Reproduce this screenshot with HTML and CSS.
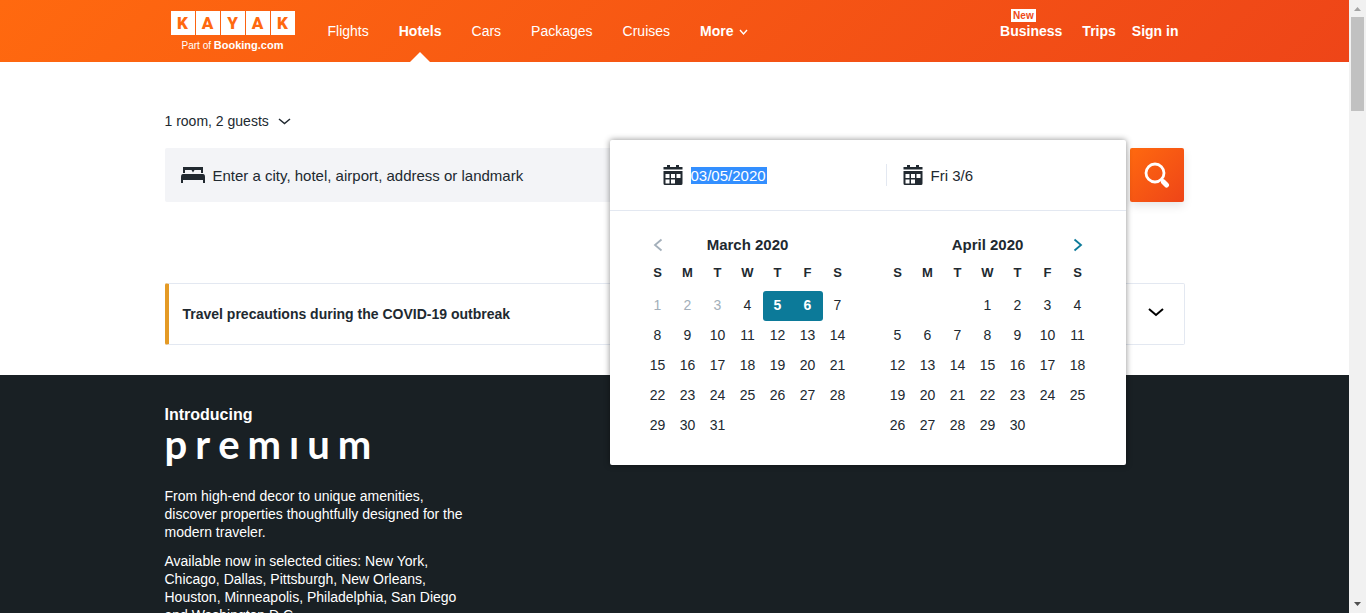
FILE: index.html
```html
<!DOCTYPE html>
<html lang="en">
<head>
<meta charset="utf-8">
<title>Hotels</title>
<link rel="stylesheet" href="styles.css">
</head>
<body>
<div class="page">
  <header class="header">
    <div class="container header-inner">
      <a class="logo" href="#">
        <span class="logo-tiles"><span>K</span><span>A</span><span>Y</span><span>A</span><span>K</span></span>
        <span class="logo-sub">Part of <b>Booking.com</b></span>
      </a>
      <nav class="nav">
        <a href="#">Flights</a>
        <a class="active" href="#">Hotels</a>
        <a href="#">Cars</a>
        <a href="#">Packages</a>
        <a href="#">Cruises</a>
        <button class="more" type="button">More
          <svg width="9" height="10" viewBox="0 0 9 10"><path d="M1 4l3.500 4L8 4" fill="none" stroke="currentColor" stroke-width="1.400"/></svg>
        </button>
      </nav>
      <nav class="account">
        <a class="business" href="#"><span class="badge">New</span>Business</a>
        <a href="#">Trips</a>
        <a href="#">Sign in</a>
      </nav>
    </div>
  </header>

  <main>
    <div class="container search-area">
      <button class="guests" type="button">1 room, 2 guests
        <svg width="13" height="7" viewBox="0 0 13 7"><path d="M1 1l5.500 4.600L12 1" fill="none" stroke="currentColor" stroke-width="1.500"/></svg>
      </button>
      <form class="search">
        <div class="fields">
          <label class="place">
            <svg width="24" height="16" viewBox="0 0 24 16" fill="currentColor"><path d="M2 0h20v6h-2V3h-6.500L12 5.500 10.500 3H4v3H2zM2 7h20q2 0 2 3v6h-2v-3H2v3H0v-6q0-3 2-3z"/></svg>
            <input type="text" aria-label="Destination" placeholder="Enter a city, hotel, airport, address or landmark">
          </label>
          <div class="picker">
            <div class="dates">
              <label class="date start">
                <svg width="20" height="20" viewBox="0 0 20 20"><path d="M4 0h3v2h6V0h3v2h3.500v2.500H.5V2H4zM.5 6h19v12.500A1.500 1.500 0 0 1 18 20H2a1.500 1.500 0 0 1-1.500-1.500z" fill="currentColor"/><path d="M2.500 9h4v4h-4zM8 9h4v4H8zM13.500 9h4v4h-4zM2.500 14.500h4v4h-4zM8 14.500h4v4H8z" fill="#fff"/></svg>
                <input class="selected-text" type="text" aria-label="Check-in" value="03/05/2020">
              </label>
              <label class="date end">
                <svg width="20" height="20" viewBox="0 0 20 20"><path d="M4 0h3v2h6V0h3v2h3.500v2.500H.5V2H4zM.5 6h19v12.500A1.500 1.500 0 0 1 18 20H2a1.500 1.500 0 0 1-1.500-1.500z" fill="currentColor"/><path d="M2.500 9h4v4h-4zM8 9h4v4H8zM13.500 9h4v4h-4zM2.500 14.500h4v4h-4zM8 14.500h4v4H8z" fill="#fff"/></svg>
                <input type="text" aria-label="Check-out" value="Fri 3/6">
              </label>
            </div>
            <div class="months">
              <section class="month">
                <div class="month-head">
                  <button class="prev" type="button" aria-label="Previous month"><svg width="10" height="14" viewBox="0 0 10 14"><path d="M8.500 1.500L2 7l6.500 5.500" fill="none" stroke="currentColor" stroke-width="1.800"/></svg></button>
                  <h2>March 2020</h2>
                </div>
                <table>
                  <thead><tr><th>S</th><th>M</th><th>T</th><th>W</th><th>T</th><th>F</th><th>S</th></tr></thead>
                  <tbody>
                    <tr><td class="past">1</td><td class="past">2</td><td class="past">3</td><td>4</td><td class="from">5</td><td class="to">6</td><td>7</td></tr>
                    <tr><td>8</td><td>9</td><td>10</td><td>11</td><td>12</td><td>13</td><td>14</td></tr>
                    <tr><td>15</td><td>16</td><td>17</td><td>18</td><td>19</td><td>20</td><td>21</td></tr>
                    <tr><td>22</td><td>23</td><td>24</td><td>25</td><td>26</td><td>27</td><td>28</td></tr>
                    <tr><td>29</td><td>30</td><td>31</td><td></td><td></td><td></td><td></td></tr>
                  </tbody>
                </table>
              </section>
              <section class="month">
                <div class="month-head">
                  <h2>April 2020</h2>
                  <button class="next" type="button" aria-label="Next month"><svg width="10" height="14" viewBox="0 0 10 14"><path d="M1.500 1.500L8 7l-6.500 5.500" fill="none" stroke="currentColor" stroke-width="1.800"/></svg></button>
                </div>
                <table>
                  <thead><tr><th>S</th><th>M</th><th>T</th><th>W</th><th>T</th><th>F</th><th>S</th></tr></thead>
                  <tbody>
                    <tr><td></td><td></td><td></td><td>1</td><td>2</td><td>3</td><td>4</td></tr>
                    <tr><td>5</td><td>6</td><td>7</td><td>8</td><td>9</td><td>10</td><td>11</td></tr>
                    <tr><td>12</td><td>13</td><td>14</td><td>15</td><td>16</td><td>17</td><td>18</td></tr>
                    <tr><td>19</td><td>20</td><td>21</td><td>22</td><td>23</td><td>24</td><td>25</td></tr>
                    <tr><td>26</td><td>27</td><td>28</td><td>29</td><td>30</td><td></td><td></td></tr>
                  </tbody>
                </table>
              </section>
            </div>
          </div>
        </div>
        <button class="submit" type="submit" aria-label="Search">
          <svg width="26" height="26" viewBox="0 0 26 26"><circle cx="11" cy="11" r="9" fill="none" stroke="#fff" stroke-width="2.800"/><path d="M17 17l3 3" stroke="#fff" stroke-width="3"/><path d="M19.500 20l3 3" stroke="#fff" stroke-width="5" stroke-linecap="round"/></svg>
        </button>
      </form>
      <div class="notice">
        <strong>Travel precautions during the COVID-19 outbreak</strong>
        <button type="button" aria-label="Show details"><svg width="16" height="12" viewBox="0 0 16 12"><path d="M1 1l7 6 7-6" fill="none" stroke="#000" stroke-width="2"/></svg></button>
      </div>
    </div>

    <section class="premium">
      <div class="container">
        <p class="intro">Introducing</p>
        <h1 class="wordmark"><span>p</span><span>r</span><span>e</span><span>m</span><span>ı</span><span>u</span><span>m</span></h1>
        <div class="copy">
          <p>From high-end decor to unique amenities, discover properties thoughtfully designed for the modern traveler.</p>
          <p>Available now in selected cities: New York, Chicago, Dallas, Pittsburgh, New Orleans, Houston, Minneapolis, Philadelphia, San Diego and Washington D.C.</p>
        </div>
      </div>
    </section>
  </main>
</div>
<div class="scrollbar" aria-hidden="true">
  <svg width="17" height="17" viewBox="0 0 17 17"><path d="M5 11l3.500-4 3.500 4z" fill="#a3a3a3"/></svg>
  <div class="thumb"></div>
  <svg class="down" width="17" height="17" viewBox="0 0 17 17"><path d="M5 6h7l-3.500 4z" fill="#505050"/></svg>
</div>
</body>
</html>
```
FILE: styles.css
```css
* { box-sizing: border-box; }

body {
  margin: 0;
  height: 100vh;
  overflow: hidden;
  display: flex;
  font-family: "Liberation Sans", Arial, sans-serif;
  font-size: 14px;
  color: #212930;
  background: #fff;
}

a { color: inherit; text-decoration: none; }
button, input { font: inherit; color: inherit; border: 0; padding: 0; background: none; outline: 0; }
svg { display: block; flex: none; }
h1, h2, p { margin: 0; }

.page { flex: 1; min-width: 0; height: 100%; overflow: hidden; display: flex; flex-direction: column; }
main { flex: 1; display: flex; flex-direction: column; }
.container { width: 100%; max-width: 1020px; margin: 0 auto; }

/* Header */
.header { flex: none; background: linear-gradient(135deg, #ff690f, #ee4518); color: #fff; }
.header-inner { height: 62px; display: flex; align-items: stretch; padding: 0 6px; }
.logo { display: flex; flex-direction: column; align-items: center; padding-top: 11px; margin-right: 33px; }
.logo-tiles { display: flex; gap: 1px; }
.logo-tiles span {
  width: 24px;
  height: 24px;
  background: #fff;
  color: #ff690f;
  font: 900 17px/24px Roboto, sans-serif;
  text-align: center;
}
.logo-sub { font-size: 10px; line-height: 12px; margin-top: 4px; }
.logo-sub b { font-size: 11px; }
.nav, .account { display: flex; line-height: 62px; }
.nav { gap: 30px; }
.nav a { position: relative; }
.nav .active { font-weight: bold; }
.nav .active::after {
  content: "";
  position: absolute;
  bottom: 0;
  left: 50%;
  margin-left: -10px;
  border: 10px solid transparent;
  border-top: 0;
  border-bottom-color: #fff;
}
.more { display: flex; align-items: center; gap: 5px; font-weight: bold; }
.account { margin-left: auto; gap: 16px; font-weight: bold; }
.business { position: relative; margin-right: 4px; }
.badge {
  position: absolute;
  top: 9px;
  left: 11px;
  padding: 0 2px;
  background: #fff;
  color: #ee4a18;
  font-size: 10px;
  line-height: 13px;
}

/* Search */
.search-area { padding: 48px 0 30px; }
.guests { display: flex; align-items: center; gap: 9px; height: 22px; }
.search { display: flex; gap: 4px; margin: 16px 1px 0 0; }
.fields { flex: 1; position: relative; background: #f3f4f7; border-radius: 2px; }
.place { display: flex; align-items: center; gap: 8px; height: 54px; padding-left: 16px; font-size: 15px; }
.place input { width: 400px; }
.place input::placeholder { color: #212930; opacity: 1; }
.submit {
  display: grid;
  place-items: center;
  width: 54px;
  height: 54px;
  border-radius: 2px;
  background: linear-gradient(135deg, #ff690f, #ee4518);
  box-shadow: 0 4px 10px rgba(0, 0, 0, .1);
}

/* Date picker */
.picker {
  position: absolute;
  top: -8px;
  right: 0;
  width: 516px;
  background: #fff;
  border-radius: 2px;
  box-shadow: 0 0 6px rgba(0, 0, 0, .45);
}
.dates { display: flex; align-items: center; height: 71px; border-bottom: 1px solid #e3e8f1; font-size: 15px; }
.date { display: flex; align-items: center; gap: 8px; height: 22px; }
.start { width: 277px; padding-left: 53px; border-right: 1px solid #e3e8f1; }
.end { padding-left: 16px; }
.date input { width: 76px; height: 17px; }
.date .selected-text { background: #338fff; color: #fff; }
.months { display: flex; justify-content: center; gap: 30px; padding: 24px 0; }
.month-head { display: grid; grid-template-columns: 30px 1fr 30px; align-items: center; height: 20px; }
.month-head h2 { grid-column: 2; grid-row: 1; font-size: 15px; line-height: 20px; text-align: center; }
.month-head button { display: grid; place-items: center; height: 20px; }
.prev { color: #a3afba; }
.next { grid-column: 3; color: #0c7a99; }
table { border-collapse: collapse; }
th { height: 36px; padding: 0 0 2px; font-size: 13px; }
td { width: 30px; height: 30px; padding: 0 0 2px; text-align: center; }
.past { color: #a3afba; }
.from, .to { background: #0c7a99; color: #fff; font-weight: bold; }
.from { border-radius: 3px 0 0 3px; }
.to { border-radius: 0 3px 3px 0; }

/* Notice */
.notice {
  display: flex;
  align-items: center;
  justify-content: space-between;
  height: 62px;
  margin-top: 81px;
  padding: 0 20px 0 14px;
  border: 1px solid #e3e8f1;
  border-left: 4px solid #e49a25;
  border-radius: 2px;
}

/* Premium */
.premium { flex: 1; padding-top: 30px; background: #192024; color: #fff; }
.intro { font-size: 16px; font-weight: bold; line-height: 20px; }
.wordmark { display: flex; gap: 8px; font: 700 40px/38px Lato, sans-serif; }
.copy { width: 304px; margin-top: 24px; line-height: 18px; }
.copy p + p { margin-top: 11px; }

/* Scroll bar */
.scrollbar { width: 17px; display: flex; flex-direction: column; background: #f1f1f1; }
.thumb { height: 94px; margin: 0 2px; background: #c1c1c1; }
.down { margin-top: auto; }
```
